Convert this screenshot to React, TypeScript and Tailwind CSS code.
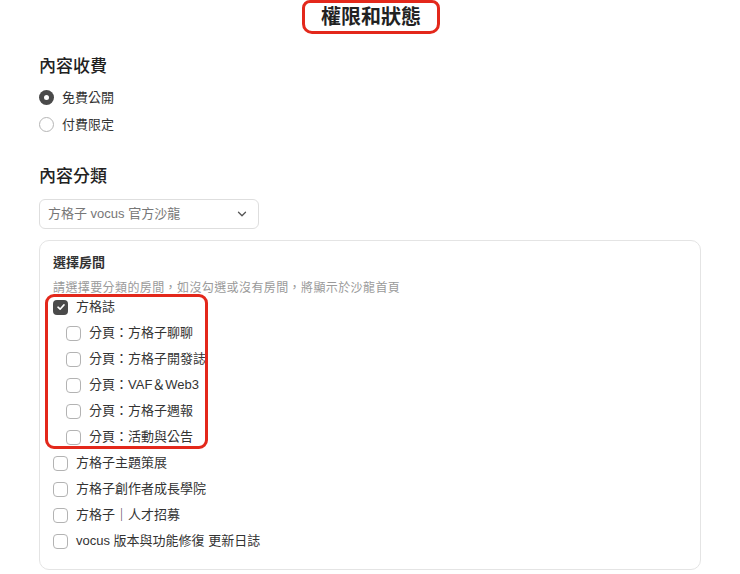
import { ChevronDown } from "lucide-react";

const font = {
  fontFamily: '"Liberation Sans", "Noto Sans CJK TC", sans-serif',
};

const subPages = [
  "分頁：方格子聊聊",
  "分頁：方格子開發誌",
  "分頁：VAF＆Web3",
  "分頁：方格子週報",
  "分頁：活動與公告",
];

const rooms = [
  "方格子主題策展",
  "方格子創作者成長學院",
  "方格子｜人才招募",
  "vocus 版本與功能修復 更新日誌",
];

function Radio({ checked, label }: { checked?: boolean; label: string }) {
  return (
    <label className="flex h-[27px] items-center gap-2">
      {checked ? (
        <span className="flex h-[15px] w-[15px] items-center justify-center rounded-full bg-[#4a4a4a]">
          <span className="h-[5px] w-[5px] rounded-full bg-white" />
        </span>
      ) : (
        <span className="h-[15px] w-[15px] rounded-full border border-[#b5b5b5] bg-white" />
      )}
      <span className="text-[13px] text-[#333]">{label}</span>
    </label>
  );
}

function Checkbox({
  checked,
  label,
  indent,
}: {
  checked?: boolean;
  label: string;
  indent?: boolean;
}) {
  return (
    <label className={`flex h-[26px] items-center gap-2 ${indent ? "pl-[13px]" : ""}`}>
      {checked ? (
        <span className="flex h-[15px] w-[15px] items-center justify-center rounded-[4px] bg-[#4a4a4a]">
          <svg width="10" height="10" viewBox="0 0 10 10" fill="none">
            <path
              d="M2 5.2 4.1 7.2 8 2.9"
              stroke="white"
              strokeWidth="1.6"
              strokeLinecap="round"
              strokeLinejoin="round"
            />
          </svg>
        </span>
      ) : (
        <span className="h-[15px] w-[15px] rounded-[4px] border border-[#b3b3b3] bg-white" />
      )}
      <span className="whitespace-nowrap text-[13px] text-[#333]">{label}</span>
    </label>
  );
}

export default function App() {
  return (
    <div className="h-[574px] w-[740px] overflow-hidden bg-white text-[#222]" style={font}>
      <div className="flex justify-center pl-[2px]">
        <div className="flex h-[34px] items-center rounded-b-[10px] rounded-t-[8px] border-[3px] border-[#e3281b] px-[16px] text-[20px] font-bold leading-none">
          權限和狀態
        </div>
      </div>

      <div className="px-[39px]">
        <h2 className="mt-[21px] text-[17px] font-medium leading-[24px]">內容收費</h2>
        <div className="mt-[5px] flex flex-col">
          <Radio checked label="免費公開" />
          <Radio label="付費限定" />
        </div>

        <h2 className="mt-[27px] text-[17px] font-medium leading-[24px]">內容分類</h2>
        <div className="mt-[10px] flex h-[30px] w-[220px] items-center justify-between rounded-[6px] border border-[#dedede] pl-[8px] pr-[9px]">
          <span className="text-[13px] text-[#777]">方格子 vocus 官方沙龍</span>
          <ChevronDown className="h-[14px] w-[14px] text-[#555]" strokeWidth={2.2} />
        </div>

        <div className="mt-[11px] rounded-[10px] border border-[#e4e4e4] pb-[15px] pl-[13px] pt-[12px]">
          <h3 className="text-[13px] font-bold leading-[20px] text-[#333]">選擇房間</h3>
          <p className="mt-[7px] text-[12px] leading-[16px] tracking-[0.4px] text-[#9a9a9a]">
            請選擇要分類的房間，如沒勾選或沒有房間，將顯示於沙龍首頁
          </p>
          <div className="-mt-[2px] flex flex-col">
            <div className="relative">
              <Checkbox checked label="方格誌" />
              {subPages.map((s) => (
                <Checkbox key={s} indent label={s} />
              ))}
              <div className="pointer-events-none absolute -left-[8px] top-0 h-[155px] w-[163px] rounded-[9px] border-[3px] border-[#e3281b]" />
            </div>
            {rooms.map((r) => (
              <Checkbox key={r} label={r} />
            ))}
          </div>
        </div>
      </div>
    </div>
  );
}
